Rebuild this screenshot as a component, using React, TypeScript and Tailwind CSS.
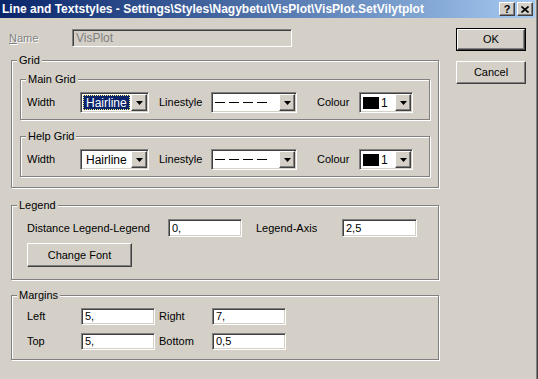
import React from 'react';

const sunken =
  'border border-t-[#808080] border-l-[#808080] border-b-white border-r-white shadow-[inset_1px_1px_0_#404040,inset_-1px_-1px_0_#d4d0c8]';
const raised =
  'border border-t-white border-l-white border-b-[#404040] border-r-[#404040] shadow-[inset_-1px_-1px_0_#808080]';

function Group({ title, className, children }: { title: string; className: string; children: React.ReactNode }) {
  return (
    <div className={`relative border border-[#808080] shadow-[1px_1px_0_#fff,inset_1px_1px_0_#fff] ${className}`}>
      <span className="absolute left-[5px] top-[-7px] bg-[#d4d0c8] px-[2px] leading-[13px]">{title}</span>
      {children}
    </div>
  );
}

function Arrow() {
  return (
    <svg width="7" height="4" viewBox="0 0 7 4">
      <path d="M0 0h7L3.5 4z" fill="#000" />
    </svg>
  );
}

function Combo({ w, children }: { w: string; children: React.ReactNode }) {
  return (
    <div className={`flex h-[21px] ${w} bg-white p-[1px] ${sunken}`}>
      <div className="flex min-w-0 flex-1 items-center">{children}</div>
      <div className={`flex h-full w-[16px] items-center justify-center bg-[#d4d0c8] ${raised}`}>
        <Arrow />
      </div>
    </div>
  );
}

function Field({ w, value, h = 'h-[18px]' }: { w: string; value: string; h?: string }) {
  return (
    <div className={`flex ${h} ${w} items-center bg-white pl-[3px] leading-none ${sunken}`}>{value}</div>
  );
}

function Button({ label, w, h }: { label: string; w: string; h: string }) {
  return (
    <div className={`flex ${w} ${h} items-center justify-center bg-[#d4d0c8] ${raised}`}>{label}</div>
  );
}

function GridRow({ focused }: { focused?: boolean }) {
  return (
    <div className="flex items-center pl-[6px] pt-[12px]">
      <span className="w-[53px]">Width</span>
      <Combo w="w-[69px]">
        {focused ? (
          <span className="mx-[1px] flex h-[15px] flex-1 items-center border border-dotted border-[#ffff80] bg-[#0a246a] pl-[2px] text-[12px] text-white">
            Hairline
          </span>
        ) : (
          <span className="pl-[4px] text-[12px]">Hairline</span>
        )}
      </Combo>
      <span className="ml-[10px] w-[52px]">Linestyle</span>
      <Combo w="w-[86px]">
        <svg width="60" height="3" className="ml-[2px]">
          <line x1="0" y1="1.5" x2="52" y2="1.5" stroke="#000" strokeWidth="1" strokeDasharray="10 4" />
        </svg>
      </Combo>
      <span className="ml-[20px] w-[42px]">Colour</span>
      <Combo w="w-[54px]">
        <span className="ml-[2px] h-[12px] w-[16px] bg-black" />
        <span className="ml-[2px] text-[12px]">1</span>
      </Combo>
    </div>
  );
}

function TitleButton({ children }: { children: React.ReactNode }) {
  return (
    <div className={`flex h-[14px] w-[16px] items-center justify-center bg-[#d4d0c8] ${raised}`}>{children}</div>
  );
}

export default function App() {
  return (
    <div
      className="flex h-[379px] w-[538px] flex-col overflow-hidden border-r border-r-[#404040] bg-[#d4d0c8] text-[11px] text-black shadow-[inset_-1px_0_0_#808080]"
      style={{ fontFamily: '"Liberation Sans", Arial, sans-serif' }}
    >
      <div className="mr-[2px] flex h-[18px] shrink-0 items-center bg-linear-to-r from-[#0a246a] to-[#a6caf0] pl-[2px] pr-[2px]">
        <span className="flex-1 whitespace-nowrap text-[12px] font-bold text-white">
          Line and Textstyles - Settings\Styles\Nagybetu\VisPlot\VisPlot.SetVilytplot
        </span>
        <div className="flex gap-[2px]">
          <TitleButton>
            <span className="text-[11px] font-bold leading-none">?</span>
          </TitleButton>
          <TitleButton>
            <svg width="8" height="7" viewBox="0 0 8 7">
              <path d="M0.5 0.5l7 6M7.5 0.5l-7 6" stroke="#000" strokeWidth="1.6" />
            </svg>
          </TitleButton>
        </div>
      </div>

      <div className="flex">
        <div className="flex w-[439px] flex-col">
          <div className="mt-[11px] flex h-[18px] items-center">
            <span className="w-[72px] pl-[9px] text-[#808080] [text-shadow:1px_1px_0_#fff]">
              <span className="underline">N</span>ame
            </span>
            <div className={`flex h-[18px] w-[220px] items-center bg-[#d4d0c8] pl-[3px] text-[12px] text-[#808080] ${sunken}`}>
              VisPlot
            </div>
          </div>

          <Group title="Grid" className="ml-[11px] mt-[13px] h-[128px] w-[428px] px-[8px] pt-[18px]">
            <Group title="Main Grid" className="h-[41px] w-[410px]">
              <GridRow focused />
            </Group>
            <Group title="Help Grid" className="mt-[16px] h-[41px] w-[410px]">
              <GridRow />
            </Group>
          </Group>

          <Group title="Legend" className="ml-[11px] mt-[17px] h-[75px] w-[428px] pl-[15px] pt-[13px]">
            <div className="flex items-center">
              <span className="w-[141px]">Distance Legend-Legend</span>
              <Field w="w-[74px]" value="0," />
              <span className="ml-[14px] w-[86px]">Legend-Axis</span>
              <Field w="w-[75px]" value="2,5" />
            </div>
            <div className="mt-[6px]">
              <Button label="Change Font" w="w-[105px]" h="h-[24px]" />
            </div>
          </Group>

          <Group title="Margins" className="ml-[11px] mt-[15px] h-[65px] w-[428px] pl-[15px] pt-[12px]">
            <div className="flex items-center">
              <span className="w-[54px]">Left</span>
              <Field w="w-[74px]" h="h-[17px]" value="5," />
              <span className="ml-[4px] w-[53px]">Right</span>
              <Field w="w-[74px]" h="h-[17px]" value="7," />
            </div>
            <div className="mt-[8px] flex items-center">
              <span className="w-[54px]">Top</span>
              <Field w="w-[74px]" h="h-[17px]" value="5," />
              <span className="ml-[4px] w-[53px]">Bottom</span>
              <Field w="w-[74px]" h="h-[17px]" value="0,5" />
            </div>
          </Group>
        </div>

        <div className="ml-[17px] flex flex-col pt-[10px]">
          <div className="border border-black">
            <Button label="OK" w="w-[68px]" h="h-[21px]" />
          </div>
          <div className="mt-[10px]">
            <Button label="Cancel" w="w-[70px]" h="h-[23px]" />
          </div>
        </div>
      </div>
    </div>
  );
}
